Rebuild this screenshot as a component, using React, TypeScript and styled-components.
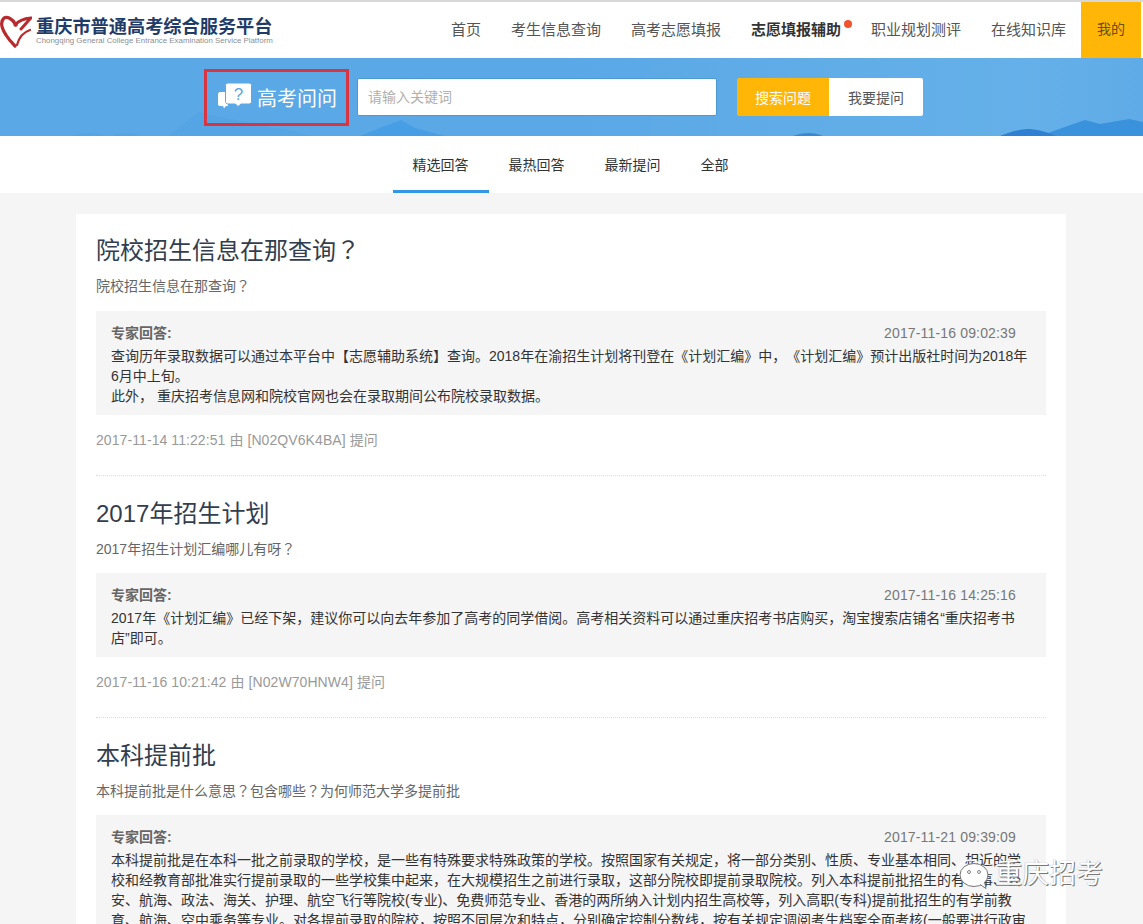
import React from 'react';
import styled, { createGlobalStyle } from 'styled-components';

const FONT = '"Liberation Sans", "Noto Sans CJK SC", sans-serif';

const GlobalStyle = createGlobalStyle`
  html, body {
    margin: 0;
    padding: 0;
    height: 924px;
    overflow: hidden;
    background: #f5f5f5;
    font-family: ${FONT};
    text-spacing-trim: space-all;
  }
`;

const navItems = [
  { label: '首页' },
  { label: '考生信息查询' },
  { label: '高考志愿填报' },
  { label: '志愿填报辅助', active: true },
  { label: '职业规划测评' },
  { label: '在线知识库' },
];

const tabs = ['精选回答', '最热回答', '最新提问', '全部'];

const questions = [
  {
    title: '院校招生信息在那查询？',
    sub: '院校招生信息在那查询？',
    time: '2017-11-16 09:02:39',
    lines: [
      '查询历年录取数据可以通过本平台中【志愿辅助系统】查询。2018年在渝招生计划将刊登在《计划汇编》中，《计划汇编》预计出版社时间为2018年6月中上旬。',
      '此外， 重庆招考信息网和院校官网也会在录取期间公布院校录取数据。',
    ],
    meta: '2017-11-14 11:22:51 由 [N02QV6K4BA] 提问',
  },
  {
    title: '2017年招生计划',
    sub: '2017年招生计划汇编哪儿有呀？',
    time: '2017-11-16 14:25:16',
    lines: [
      '2017年《计划汇编》已经下架，建议你可以向去年参加了高考的同学借阅。高考相关资料可以通过重庆招考书店购买，淘宝搜索店铺名“重庆招考书店”即可。',
    ],
    meta: '2017-11-16 10:21:42 由 [N02W70HNW4] 提问',
  },
  {
    title: '本科提前批',
    sub: '本科提前批是什么意思？包含哪些？为何师范大学多提前批',
    time: '2017-11-21 09:39:09',
    lines: [
      '本科提前批是在本科一批之前录取的学校，是一些有特殊要求特殊政策的学校。按照国家有关规定，将一部分类别、性质、专业基本相同、相近的学校和经教育部批准实行提前录取的一些学校集中起来，在大规模招生之前进行录取，这部分院校即提前录取院校。列入本科提前批招生的有军事、公安、航海、政法、海关、护理、航空飞行等院校(专业)、免费师范专业、香港的两所纳入计划内招生高校等，列入高职(专科)提前批招生的有学前教育、航海、空中乘务等专业。对各提前录取的院校，按照不同层次和特点，分别确定控制分数线，按有关规定调阅考生档案全面考核(一般要进行政审',
    ],
    meta: '',
  },
];

// the reference centres the full-width question mark in its cell
const withMarks = (text: string) =>
  text.split('？').map((part, i, all) => (
    <React.Fragment key={i}>
      {part}
      {i < all.length - 1 && <QuestionMark>？</QuestionMark>}
    </React.Fragment>
  ));

const Logo = () => (
  <LogoSvg width="32" height="34" viewBox="0 0 32 34">
    <g fill="none" stroke="#b92a2e" strokeLinecap="round">
      <path d="M16 11C13 5 7 2 4 4C0 8 2 15 6 21C9 26 12 29 15 32" strokeWidth="3.200" />
      <path d="M15 11C19 6 25 4.500 31 4C27 8 24 12 21 15" strokeWidth="3" />
      <path d="M30 16C24 18 19 23 17 31" strokeWidth="2.200" />
    </g>
  </LogoSvg>
);

const BubbleIcon = () => (
  <svg width="34" height="26" viewBox="0 0 34 26">
    <path d="M2 9H10V23H10L9 23H8L6 25.500L5 23H2C.9 23 0 22 0 21V11C0 10 .9 9 2 9Z" fill="#fff" />
    <path
      d="M10 0H31C32.600 0 33.500 1 33.500 2.500V18.500C33.500 20 32.600 21 31 21H23L20 23.500L17.500 21H10C8.400 21 7.500 20 7.500 18.500V2.500C7.500 1 8.400 0 10 0Z"
      fill="#fff"
      stroke="#5aa8e5"
      strokeWidth="1"
    />
    <text x="20.500" y="16.500" fontSize="17" fill="#5aa7e2" textAnchor="middle" fontFamily={FONT}>
      ?
    </text>
  </svg>
);

const Mountains = () => (
  <HeroArt viewBox="0 0 1143 78" preserveAspectRatio="none">
    <path d="M168 78L199 54C215 58 250 66 290 72L310 78Z" fill="#4f9fe2" opacity=".45" />
    <path d="M72 78C80 74 95 74 105 78Z M112 78C120 74 130 74 138 78Z" fill="#4f9fe2" opacity=".5" />
    <path d="M360 78L385 68L401 62L415 70L445 78Z" fill="#459ce4" opacity=".85" />
    <path d="M793 78C803 74 815 74 823 78Z" fill="#2f7fd0" opacity=".8" />
    <path d="M1040 78L1062 70L1085 62L1100 66L1129 61L1143 64V78Z" fill="#3a92dd" />
    <path d="M1000 78C1010 74 1020 71 1030 71C1040 72 1050 75 1056 78Z" fill="#2f80d2" />
  </HeroArt>
);

const WechatMark = () => (
  <svg width="34" height="30" viewBox="0 0 34 30">
    <ellipse cx="13" cy="11" rx="12" ry="10" fill="none" stroke="#fff" strokeWidth="1.500" />
    <ellipse cx="17" cy="16" rx="14" ry="11.500" fill="#fff" stroke="#777" strokeWidth="1" />
    <path d="M23 25.500L29 29.500L27.500 23" fill="#fff" stroke="#777" strokeWidth="1" />
    <circle cx="12" cy="13" r="1.500" fill="none" stroke="#666" strokeWidth=".8" />
    <circle cx="22" cy="13" r="1.500" fill="none" stroke="#666" strokeWidth=".8" />
  </svg>
);

const App: React.FC = () => {
  return (
    <Page>
      <GlobalStyle />
      <TopBar>
        <Brand>
          <Logo />
          <BrandText>
            <BrandName>重庆市普通高考综合服务平台</BrandName>
            <BrandSub>Chongqing General College Entrance Examination Service Platform</BrandSub>
          </BrandText>
        </Brand>
        <Nav>
          {navItems.map((item) => (
            <NavItem key={item.label} $active={item.active}>
              {item.label}
              {item.active && <Dot />}
            </NavItem>
          ))}
          <MineButton>我的</MineButton>
        </Nav>
      </TopBar>

      <Hero>
        <Mountains />
        <HeroTitle>
          <BubbleIcon />
          <span>高考问问</span>
        </HeroTitle>
        <SearchInput placeholder="请输入关键词" />
        <Actions>
          <ActionButton $primary>搜索问题</ActionButton>
          <ActionButton>我要提问</ActionButton>
        </Actions>
      </Hero>

      <TabBar>
        {tabs.map((tab, i) => (
          <Tab key={tab} $active={i === 0}>
            {tab}
          </Tab>
        ))}
      </TabBar>

      <Card>
        {questions.map((q) => (
          <Question key={q.title}>
            <QuestionTitle>{withMarks(q.title)}</QuestionTitle>
            <QuestionSub>{withMarks(q.sub)}</QuestionSub>
            <Answer>
              <AnswerHead>
                <AnswerLabel>专家回答:</AnswerLabel>
                <AnswerTime>{q.time}</AnswerTime>
              </AnswerHead>
              {q.lines.map((line) => (
                <AnswerText key={line}>{line}</AnswerText>
              ))}
            </Answer>
            {q.meta && <Meta>{q.meta}</Meta>}
          </Question>
        ))}
      </Card>

      <Watermark>
        <WechatMark />
        <WatermarkText>重庆招考</WatermarkText>
      </Watermark>
    </Page>
  );
};

export default App;

const Page = styled.div`
  position: relative;
  height: 924px;
  overflow: hidden;
  background: #f5f5f5;
  color: #333;
`;

const TopBar = styled.header`
  height: 56px;
  display: flex;
  justify-content: space-between;
  background: #fff;
  border-top: 2px solid #d8d8d8;
`;

const Brand = styled.div`
  display: flex;
  align-items: flex-start;
  gap: 4px;
`;

const LogoSvg = styled.svg`
  margin-top: 12px;
`;

const BrandText = styled.div`
  display: flex;
  flex-direction: column;
  padding-top: 15px;
`;

const BrandName = styled.div`
  font-size: 18.2px;
  line-height: 20px;
  font-weight: 700;
  color: #1f3c68;
  white-space: nowrap;
`;

const BrandSub = styled.div`
  font-size: 7.9px;
  line-height: 8px;
  color: #8c8f94;
  white-space: nowrap;
`;

const Nav = styled.nav`
  display: flex;
  align-items: stretch;
  padding-right: 2px;
`;

const NavItem = styled.a<{ $active?: boolean }>`
  position: relative;
  display: flex;
  align-items: center;
  margin-right: 30px;
  padding-bottom: 4px;
  font-size: 15px;
  color: ${(p) => (p.$active ? '#333' : '#555')};
  font-weight: ${(p) => (p.$active ? 700 : 400)};

  &:nth-child(6) {
    margin-right: 15px;
  }
`;

const Dot = styled.i`
  position: absolute;
  top: 18px;
  right: -11px;
  width: 8px;
  height: 8px;
  border-radius: 50%;
  background: #f0532d;
`;

const MineButton = styled.a`
  width: 60px;
  display: flex;
  align-items: center;
  justify-content: center;
  padding-bottom: 4px;
  background: #ffb606;
  color: #6b4e10;
  font-size: 14px;
`;

const Hero = styled.section`
  position: relative;
  height: 78px;
  display: flex;
  align-items: center;
  padding-left: 204px;
  background: linear-gradient(90deg, #5aa8e5 0%, #5aa8e6 50%, #65b0e9 90%, #5fabe7 100%);
`;

const HeroArt = styled.svg`
  position: absolute;
  inset: 0;
  width: 100%;
  height: 100%;
`;

const HeroTitle = styled.div`
  position: relative;
  box-sizing: border-box;
  width: 145px;
  height: 57px;
  display: flex;
  align-items: center;
  gap: 5px;
  padding-left: 11px;
  border: 3px solid #d9343f;
  color: #fff;
  font-size: 20px;

  svg {
    margin-bottom: 3px;
  }
`;

const SearchInput = styled.input`
  position: relative;
  box-sizing: border-box;
  width: 360px;
  height: 38px;
  margin-left: 8px;
  padding: 0 10px;
  border: 1px solid #4d9ad3;
  border-radius: 2px;
  outline: none;
  background: #fff;
  font-family: ${FONT};
  font-size: 14px;

  &::placeholder {
    color: #b0b0b0;
  }
`;

const Actions = styled.div`
  position: relative;
  display: flex;
  margin-left: 20px;
`;

const ActionButton = styled.button<{ $primary?: boolean }>`
  width: ${(p) => (p.$primary ? '92px' : '94px')};
  height: 38px;
  border: 0;
  padding: 0;
  border-radius: ${(p) => (p.$primary ? '2px 0 0 2px' : '0 2px 2px 0')};
  background: ${(p) => (p.$primary ? '#ffb606' : '#fff')};
  color: ${(p) => (p.$primary ? '#fff' : '#555')};
  font-family: ${FONT};
  font-size: 14px;
`;

const TabBar = styled.nav`
  height: 57px;
  display: flex;
  justify-content: center;
  padding-right: 2px;
  background: #fff;
`;

const Tab = styled.a<{ $active?: boolean }>`
  box-sizing: border-box;
  height: 57px;
  padding: 19px 20px 0;
  font-size: 14px;
  line-height: 20px;
  color: #333;
  border-bottom: 3px solid ${(p) => (p.$active ? '#3497e6' : 'transparent')};
`;

const Card = styled.main`
  width: 950px;
  margin: 21px 0 0 76px;
  padding: 0 20px;
  background: #fff;
`;

const Question = styled.article`
  padding: 20px 0 25px;
  border-bottom: 1px dotted #ddd;
`;

const QuestionTitle = styled.h2`
  margin: 0;
  font-size: 24px;
  line-height: 34px;
  font-weight: 400;
  color: #333e4d;

  article:not(:first-child) & {
    margin-top: 1px;
  }
`;

const QuestionSub = styled.p`
  margin: 8px 0 15px;
  font-size: 14px;
  line-height: 20px;
  color: #666;

  article:not(:first-child) & {
    margin-bottom: 14px;
  }
`;

const QuestionMark = styled.span`
  font-family: "Noto Sans CJK TC", sans-serif;
  line-height: 0;
`;

const Answer = styled.div`
  padding: 12px 15px 9px;
  background: #f5f5f5;
`;

const AnswerHead = styled.div`
  display: flex;
  justify-content: space-between;
  margin-bottom: 3px;
  line-height: 20px;
`;

const AnswerLabel = styled.span`
  font-size: 14px;
  font-weight: 700;
  color: #666;
`;

const AnswerTime = styled.span`
  margin-right: 15px;
  font-size: 14px;
  letter-spacing: 0.16px;
  color: #777;
`;

const AnswerText = styled.p`
  margin: 0;
  font-size: 14px;
  line-height: 20px;
  color: #333;
`;

const Meta = styled.div`
  margin-top: 15px;
  font-size: 14px;
  line-height: 20px;
  letter-spacing: 0.08px;
  color: #999;
`;

const Watermark = styled.div`
  position: absolute;
  left: 957px;
  top: 859px;
  display: flex;
  align-items: center;
`;

const WatermarkText = styled.span`
  margin-left: 4px;
  font-size: 27px;
  line-height: 30px;
  color: #fff;
  text-shadow: 1px 1px 0 #777, 0 0 1px #888;
`;
